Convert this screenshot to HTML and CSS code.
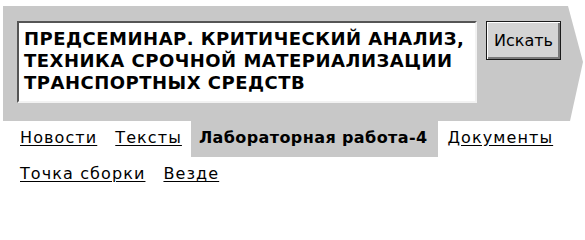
FILE: index.html
```html
<!DOCTYPE html>
<html lang="ru">
<head>
<meta charset="utf-8">
<title>Поиск</title>
<link rel="stylesheet" href="styles.css">
</head>
<body>
<div class="banner">
  <form class="search">
    <div class="query">ПРЕДСЕМИНАР. КРИТИЧЕСКИЙ АНАЛИЗ, ТЕХНИКА СРОЧНОЙ МАТЕРИАЛИЗАЦИИ ТРАНСПОРТНЫХ СРЕДСТВ</div>
    <button type="button" class="btn">Искать</button>
  </form>
</div>
<nav class="tabs">
  <a class="tab" href="#">Новости</a>
  <a class="tab" href="#">Тексты</a>
  <span class="tab active">Лабораторная работа-4</span>
  <a class="tab" href="#">Документы</a>
  <a class="tab" href="#">Точка сборки</a>
  <a class="tab" href="#">Везде</a>
</nav>
</body>
</html>
```
FILE: styles.css
```css
html, body {
  margin: 0;
  padding: 0;
  background: #fff;
}
body {
  padding: 6px 0 0 3px;
  font-family: "DejaVu Sans", Verdana, sans-serif;
  color: #000;
}
.banner {
  width: 580px;
  height: 115px;
  background: #c8c8c8;
  clip-path: polygon(0 0, 565px 0, 580px 56px, 567px 115px, 0 115px);
  box-sizing: border-box;
  padding: 15px 0 0 14px;
}
.search {
  display: flex;
  align-items: flex-start;
  gap: 9px;
  margin: 0;
}
.query {
  width: 460px;
  height: 82px;
  box-sizing: border-box;
  background: #fff;
  border-style: solid;
  border-width: 2px;
  border-color: #555 #f2f2f2 #f2f2f2 #555;
  padding: 5px 2px 0 5px;
  font-weight: bold;
  font-size: 18px;
  letter-spacing: 0.5px;
  line-height: 22px;
}
.btn {
  margin-top: 0;
  width: 75px;
  height: 39px;
  box-sizing: border-box;
  background: #d4d4d4;
  border: 1px solid #1a1a1a;
  box-shadow: inset 1px 1px 0 #fff, inset -2px -2px 0 #7a7a7a;
  font-family: "DejaVu Sans", Verdana, sans-serif;
  font-size: 16px;
  color: #000;
  padding: 0;
}
.tabs {
  display: flex;
  flex-wrap: wrap;
  width: 570px;
  padding-left: 8px;
}
.tab {
  display: block;
  height: 36px;
  line-height: 34px;
  padding: 0 9px;
  font-size: 16px;
  letter-spacing: 1.1px;
  color: #000;
  text-decoration: underline;
  text-underline-offset: 2px;
}
.tab.active {
  background: #c8c8c8;
  font-weight: bold;
  letter-spacing: 0.4px;
  padding: 0 11px 0 8px;
  text-decoration: none;
}
```
